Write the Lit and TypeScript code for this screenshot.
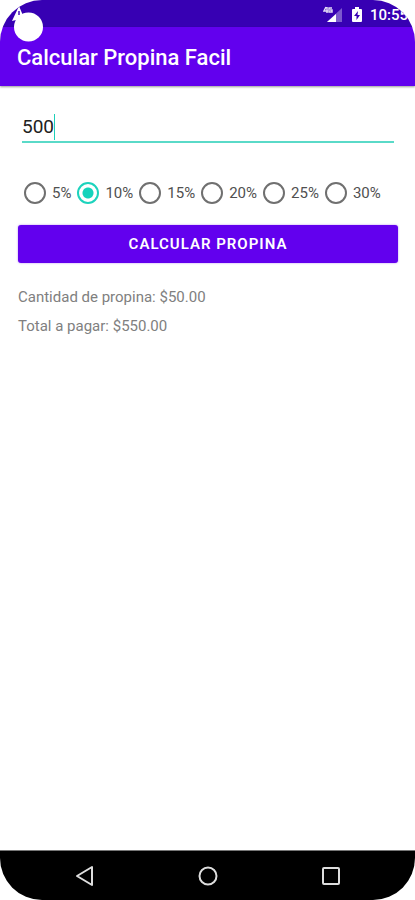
import { LitElement, html, css } from "lit";
import { customElement, state } from "lit/decorators.js";

const RATES = [5, 10, 15, 20, 25, 30];

@customElement("app-root")
export class AppRoot extends LitElement {
  @state() private amount = "500";
  @state() private rate = 10;
  @state() private tip = 50;
  @state() private total = 550;

  static styles = css`
    :host {
      display: block;
      background: #fff;
      font-family: Roboto, "Liberation Sans", sans-serif;
    }
    * {
      box-sizing: border-box;
    }
    .screen {
      position: relative;
      display: flex;
      flex-direction: column;
      min-height: 100vh;
      overflow: hidden;
      border-radius: 42px;
      background: #fff;
    }
    .status {
      display: flex;
      align-items: center;
      justify-content: flex-end;
      height: 27px;
      padding: 2px 7px 0 0;
      background: #3700b3;
      color: #fff;
    }
    .status svg,
    .nav svg {
      display: block;
    }
    .signal {
      margin-right: 8px;
    }
    .battery {
      margin-right: 7px;
    }
    .clock {
      font-size: 15px;
      font-weight: 500;
      line-height: 24px;
    }
    .cutout {
      position: absolute;
      top: 4px;
      left: 10px;
    }
    .bar {
      display: flex;
      align-items: center;
      height: 59px;
      padding: 3px 17px 0;
      background: #6200ee;
      box-shadow: 0 1px 2px rgba(0, 0, 0, 0.4);
    }
    h1 {
      margin: 0;
      color: #fff;
      font-size: 22px;
      font-weight: 500;
      line-height: 28px;
    }
    main {
      flex: 1;
      padding: 26px 17px 26px 18px;
    }
    .field {
      display: flex;
      align-items: center;
      height: 31px;
      margin: 0 4px;
      padding-top: 1px;
      border-bottom: 2px solid #5adac8;
      cursor: text;
    }
    .field input {
      field-sizing: content;
      min-width: 1px;
      padding: 0;
      border: 0;
      outline: 0;
      background: none;
      color: #212121;
      font: 19px/26px Roboto, "Liberation Sans", sans-serif;
      caret-color: transparent;
    }
    .caret {
      width: 1px;
      height: 26px;
      background: #1dcfb8;
    }
    .rates {
      display: flex;
      gap: 6px;
      margin: 38px 0 0;
      padding: 0 6px;
      border: 0;
    }
    .rate {
      display: flex;
      align-items: center;
      gap: 6px;
      color: #505050;
      font-size: 15px;
      line-height: 24px;
    }
    .rate input {
      appearance: none;
      flex: none;
      width: 22px;
      height: 22px;
      margin: 0;
      border: 2px solid #707070;
      border-radius: 50%;
      background: #fff;
    }
    .rate input:checked {
      border-color: #1dd3bd;
      background: radial-gradient(circle, #14d3bc 5px, #fff 6px);
    }
    .calc {
      display: block;
      width: 100%;
      height: 38px;
      margin: 20px 0 0;
      padding: 0;
      border: 0;
      border-radius: 3px;
      background: #6200ee;
      color: #fff;
      font: 600 15px/38px Roboto, "Liberation Sans", sans-serif;
      letter-spacing: 1px;
      text-transform: uppercase;
      box-shadow: 0 0 2px rgba(98, 0, 238, 0.5);
    }
    .result {
      margin: 0;
      color: #808080;
      font-size: 15px;
      line-height: 29px;
    }
    .results {
      margin-top: 20px;
    }
    .nav {
      display: grid;
      grid-template-columns: repeat(3, 123px);
      justify-content: center;
      align-items: center;
      height: 50px;
      border-top: 1px solid #777;
      background: #000;
    }
    .nav button {
      display: flex;
      justify-content: center;
      padding: 0;
      border: 0;
      background: none;
    }
  `;

  private calculate() {
    const value = Number(this.amount) || 0;
    this.tip = (value * this.rate) / 100;
    this.total = value + this.tip;
  }

  render() {
    return html`
      <div class="screen">
        <div class="status">
          <svg class="signal" width="20" height="18" viewBox="0 0 20 18" aria-hidden="true">
            <path d="M4 16 19 2V16Z" fill="#fff" fill-opacity=".35" />
            <path d="M4 16 13 8V16Z" fill="#fff" />
            <path d="M3 1 1 5H5M4 1V7M9 2H6V6H9V4H7" fill="none" stroke="#fff" stroke-opacity=".85" stroke-width="1.5" />
          </svg>
          <svg class="battery" width="12" height="16" viewBox="0 0 12 16" aria-hidden="true">
            <path d="M4 0H8V2H10Q11 2 11 3V14Q11 15 10 15H2Q1 15 1 14V3Q1 2 2 2H4Z" fill="#fff" />
            <path d="M7 4 3 9H5.500V13L9 8H6.500Z" fill="#3700b3" />
          </svg>
          <span class="clock">10:55</span>
        </div>
        <header class="bar"><h1>Calcular Propina Facil</h1></header>
        <svg class="cutout" width="34" height="38" viewBox="0 0 34 38" aria-hidden="true">
          <path d="M9 2 14 14 2 17Z" fill="#fff" />
          <path d="M9 7V11" stroke="#3700b3" stroke-opacity=".7" stroke-width="2" />
          <circle cx="18.500" cy="23" r="14.500" fill="#fff" />
        </svg>
        <main>
          <label class="field">
            <input
              type="text"
              inputmode="decimal"
              aria-label="Cantidad"
              .value=${this.amount}
              @input=${(e: Event) => (this.amount = (e.target as HTMLInputElement).value)}
            />
            <span class="caret"></span>
          </label>
          <fieldset class="rates" aria-label="Porcentaje">
            ${RATES.map(
              (r) => html`<label class="rate">
                <input type="radio" name="rate" .checked=${r === this.rate} @change=${() => (this.rate = r)} />
                <span>${r}%</span>
              </label>`
            )}
          </fieldset>
          <button class="calc" @click=${this.calculate}>Calcular propina</button>
          <div class="results">
            <p class="result">Cantidad de propina: $${this.tip.toFixed(2)}</p>
            <p class="result">Total a pagar: $${this.total.toFixed(2)}</p>
          </div>
        </main>
        <nav class="nav">
          <button aria-label="Atrás">
            <svg width="22" height="22" viewBox="0 0 22 22">
              <path d="M18 2V20L3 11Z" fill="none" stroke="#ddd" stroke-width="2" stroke-linejoin="round" />
            </svg>
          </button>
          <button aria-label="Inicio">
            <svg width="22" height="22" viewBox="0 0 22 22">
              <circle cx="11" cy="11" r="8.500" fill="none" stroke="#ddd" stroke-width="2" />
            </svg>
          </button>
          <button aria-label="Recientes">
            <svg width="22" height="22" viewBox="0 0 22 22">
              <rect x="3" y="3" width="16" height="16" rx="1" fill="none" stroke="#ddd" stroke-width="2" />
            </svg>
          </button>
        </nav>
      </div>
    `;
  }
}
